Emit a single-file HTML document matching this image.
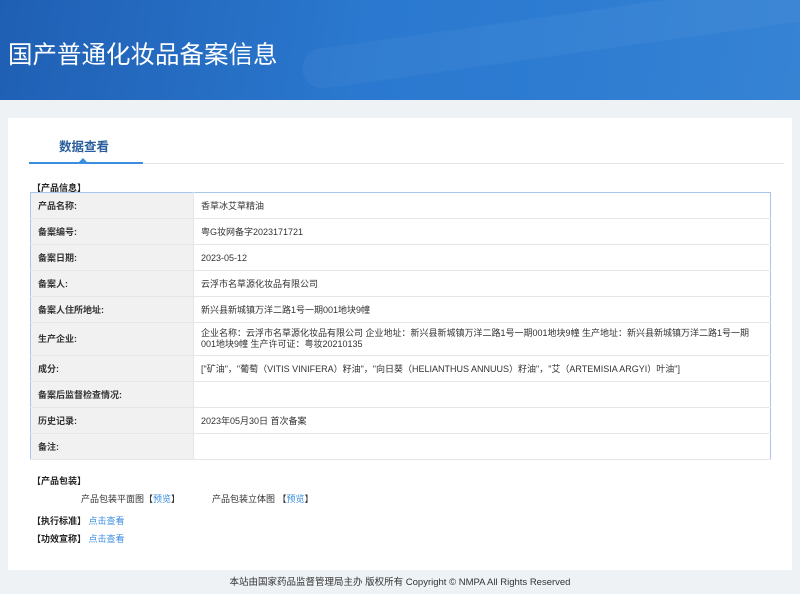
<!DOCTYPE html>
<html><head><meta charset="utf-8"><style>
*{margin:0;padding:0;box-sizing:border-box}
body{width:800px;height:594px;background:#eef2f5;font-family:"Liberation Sans","Noto Sans CJK SC",sans-serif;font-size:9px;color:#333;overflow:hidden;position:relative}
.hd{position:absolute;left:0;top:0;width:800px;height:100px;background:linear-gradient(100deg,#1f5fb3 0%,#2a78cf 45%,#2d7cd2 70%,#3683d4 100%);overflow:hidden}
.hd .g1{position:absolute;left:300px;top:15px;width:520px;height:40px;border-radius:30px;background:rgba(255,255,255,.04);transform:rotate(-8deg)}
.hd h1{position:absolute;left:8px;top:36px;font-size:24.5px;font-weight:normal;color:#fff}
.card{position:absolute;left:8px;top:118px;width:784px;height:452px;background:#fff}
.tab{position:absolute;left:59px;top:136px;font-size:12.5px;color:#2a5d9c;font-weight:bold}
.tl{position:absolute;left:29px;top:163px;width:755px;height:1px;background:#e4e4e4}
.tb{position:absolute;left:29px;top:162px;width:114px;height:2px;background:#3a8ee0}
.tri{position:absolute;left:79px;top:158px;width:0;height:0;border-left:4px solid transparent;border-right:4px solid transparent;border-bottom:4px solid #3a8ee0}
.sec{position:absolute;left:32px;font-weight:bold;color:#222;font-size:9px}
table{position:absolute;left:30px;top:192px;width:741px;border-collapse:collapse;border:1px solid #a9c6ec}
td{border-bottom:1px solid #e6e6e6;height:26px;padding:0 7px;vertical-align:middle;font-size:9px}
td.l{width:163px;background:#f1f1f1;font-weight:bold;color:#333;padding-left:7px;border-right:1px solid #e6e6e6}
tr.t td{height:33px;line-height:11px}
.a{color:#3a8ee0}
.f{position:absolute;top:574px;left:0;width:800px;text-align:center;font-size:9.5px;color:#333}
</style></head><body>
<div class="hd"><div class="g1"></div><h1>国产普通化妆品备案信息</h1></div>
<div class="card"></div>
<div class="tab">数据查看</div>
<div class="tl"></div><div class="tb"></div><div class="tri"></div>
<div class="sec" style="top:181px">【产品信息】</div>
<table>
<tr><td class="l">产品名称:</td><td>香草冰艾草精油</td></tr>
<tr><td class="l">备案编号:</td><td>粤G妆网备字2023171721</td></tr>
<tr><td class="l">备案日期:</td><td>2023-05-12</td></tr>
<tr><td class="l">备案人:</td><td>云浮市名草源化妆品有限公司</td></tr>
<tr><td class="l">备案人住所地址:</td><td>新兴县新城镇万洋二路1号一期001地块9幢</td></tr>
<tr class="t"><td class="l">生产企业:</td><td>企业名称：云浮市名草源化妆品有限公司 企业地址：新兴县新城镇万洋二路1号一期001地块9幢 生产地址：新兴县新城镇万洋二路1号一期<br>001地块9幢 生产许可证：粤妆20210135</td></tr>
<tr><td class="l">成分:</td><td>["矿油"，"葡萄（VITIS VINIFERA）籽油"，"向日葵（HELIANTHUS ANNUUS）籽油"，"艾（ARTEMISIA ARGYI）叶油"]</td></tr>
<tr><td class="l">备案后监督检查情况:</td><td></td></tr>
<tr><td class="l">历史记录:</td><td>2023年05月30日 首次备案</td></tr>
<tr><td class="l">备注:</td><td></td></tr>
</table>
<div class="sec" style="top:474px">【产品包装】</div>
<div style="position:absolute;left:81px;top:492px">产品包装平面图【<span class="a">预览</span>】</div>
<div style="position:absolute;left:212px;top:492px">产品包装立体图 【<span class="a">预览</span>】</div>
<div class="sec" style="top:514px">【执行标准】 <span class="a" style="font-weight:normal">点击查看</span></div>
<div class="sec" style="top:532px">【功效宣称】 <span class="a" style="font-weight:normal">点击查看</span></div>
<div class="f">本站由国家药品监督管理局主办 版权所有 Copyright © NMPA All Rights Reserved</div>
</body></html>
